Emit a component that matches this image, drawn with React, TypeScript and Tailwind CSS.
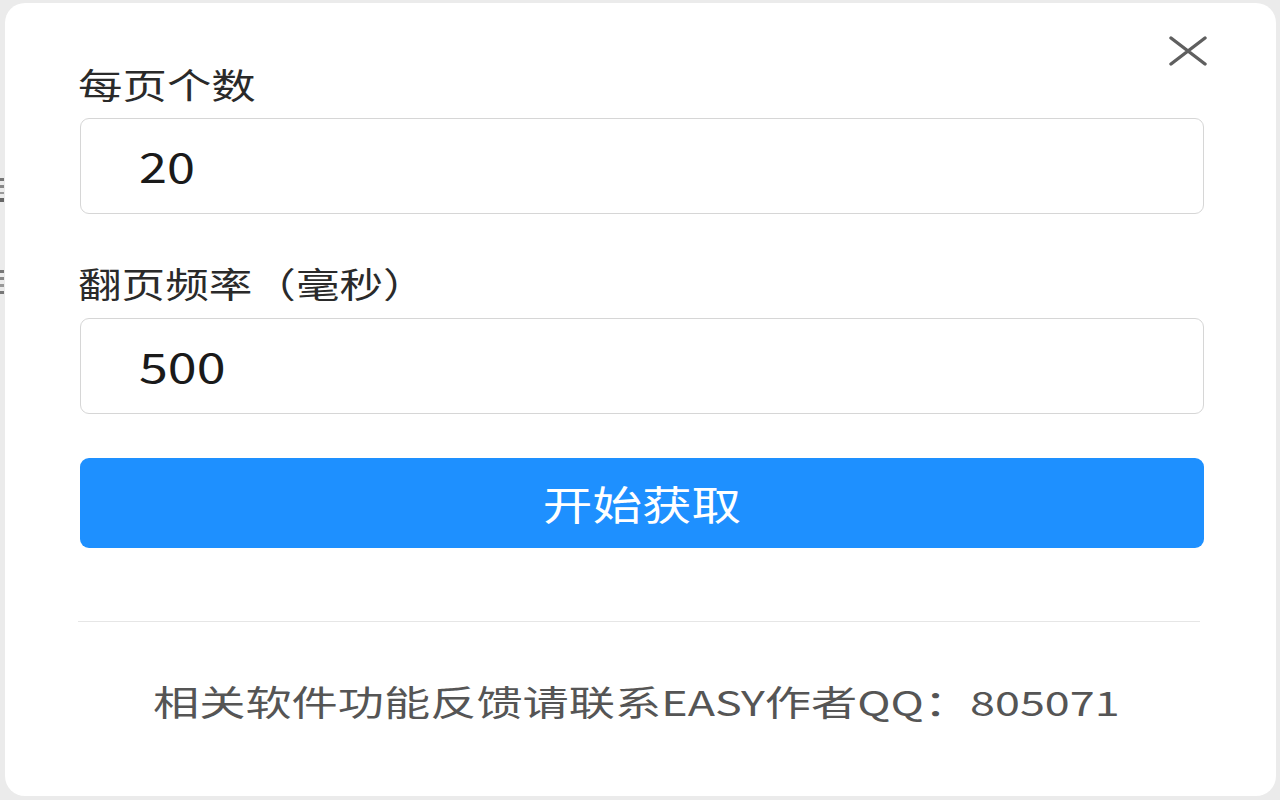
import React from "react";

const font = { fontFamily: '"Noto Sans CJK SC", "Noto Sans", sans-serif' };

export default function App() {
  return (
    <div
      className="w-[1280px] h-[800px] bg-[#ebebeb] flex pt-[3px] pb-[4px] pr-[4px] overflow-hidden"
      style={font}
    >
      <div className="w-[5px] flex flex-col">
        <div className="h-[175px] shrink-0" />
        <div className="flex flex-col gap-[4px] w-[4px]">
          <div className="h-[3px] bg-[#777]" />
          <div className="h-[3px] bg-[#888]" />
          <div className="h-[2px] bg-[#999]" />
          <div className="h-[4px] bg-[#666]" />
        </div>
        <div className="h-[68px] shrink-0" />
        <div className="flex flex-col gap-[4px] w-[4px]">
          <div className="h-[3px] bg-[#777]" />
          <div className="h-[3px] bg-[#888]" />
          <div className="h-[3px] bg-[#999]" />
          <div className="h-[3px] bg-[#777]" />
        </div>
      </div>
      <div className="relative flex-1 bg-white rounded-[20px] pl-[75px] pr-[72px] pt-[57px] flex flex-col">
        <button className="absolute top-[28px] right-[66px] w-[44px] h-[40px] flex items-center justify-center">
          <svg width="40" height="30" viewBox="0 0 40 30">
            <path d="M3 2 L37 28 M37 2 L3 28" stroke="#5f5f5f" strokeWidth="3.4" strokeLinecap="round" fill="none" />
          </svg>
        </button>

        <div className="h-[48px] flex items-center -ml-[2px]">
          <span className="inline-block origin-left scale-x-[1.27] text-[35px] text-[#2a2a2a]">每页个数</span>
        </div>
        <div className="mt-[10px] h-[96px] border border-[#d6d6d6] rounded-[9px] flex items-center pl-[58px]">
          <span className="inline-block origin-left scale-x-[1.26] text-[40px] text-[#1a1a1a]">20</span>
        </div>

        <div className="mt-[45px] h-[48px] flex items-center -ml-[2px]">
          <span className="inline-block origin-left scale-x-[1.245] text-[35px] text-[#2a2a2a]">翻页频率（毫秒）</span>
        </div>
        <div className="mt-[11px] h-[96px] border border-[#d6d6d6] rounded-[9px] flex items-center pl-[58px]">
          <span className="inline-block origin-left scale-x-[1.3] text-[40px] text-[#1a1a1a]">500</span>
        </div>

        <button className="mt-[44px] h-[90px] w-full bg-[#1e90ff] rounded-[9px] flex items-center justify-center">
          <span className="inline-block scale-x-[1.24] text-[40px] text-white">开始获取</span>
        </button>

        <div className="mt-[73px] h-[1px] bg-[#e6e6e6] -ml-[2px] mr-[4px]" />

        <div className="mt-[55px] h-[48px] flex items-center">
          <span className="inline-block origin-left ml-[73px] scale-x-[1.32] text-[35px] text-[#555] whitespace-nowrap">
            相关软件功能反馈请联系<span className="text-[34px]">EASY</span>作者<span className="text-[34px]">QQ</span>：<span className="text-[34px]">805071</span>
          </span>
        </div>
      </div>
    </div>
  );
}
